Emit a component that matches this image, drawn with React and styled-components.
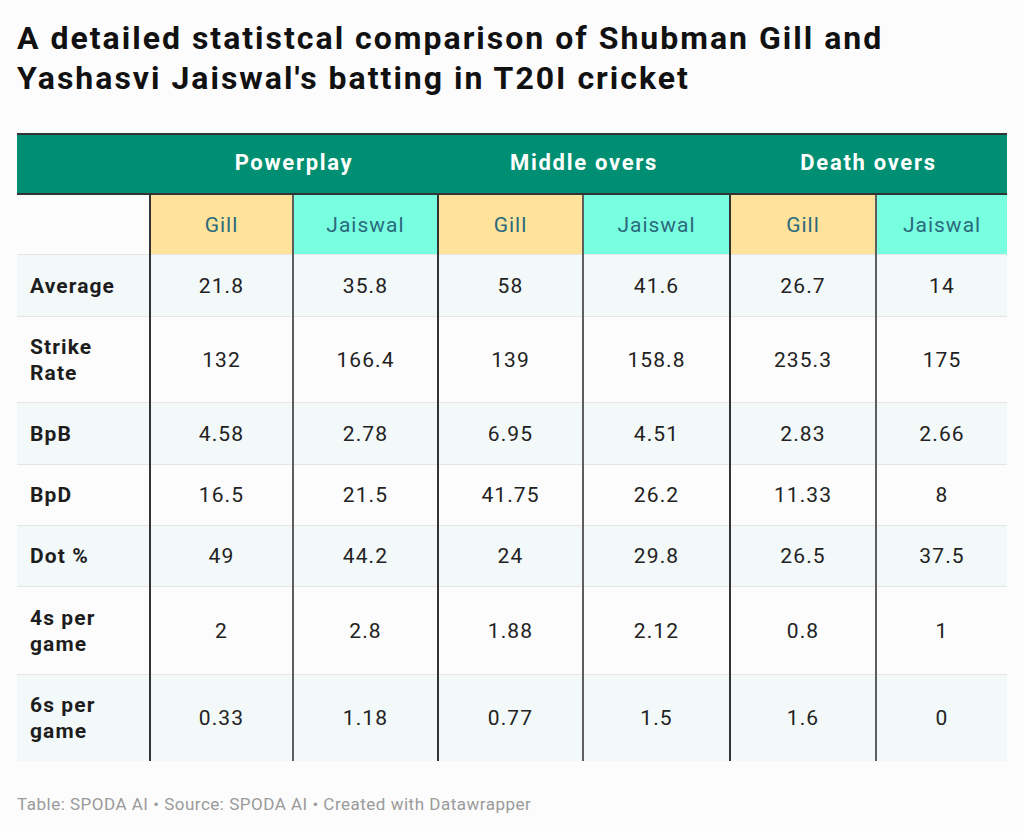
import React from 'react';
import styled, { createGlobalStyle } from 'styled-components';

const GlobalStyle = createGlobalStyle`
  html, body {
    margin: 0;
    padding: 0;
    background: #fcfcfc;
    font-family: Roboto, "Liberation Sans", sans-serif;
  }
`;

const Page = styled.div`
  padding: 18px 17px 0 17px;
  width: 990px;
`;

const Title = styled.h1`
  margin: 0 0 35px 0;
  font-size: 32px;
  line-height: 40px;
  font-weight: 700;
  color: #111;
  letter-spacing: 2px;
  white-space: nowrap;
`;

const Table = styled.table`
  width: 990px;
  border-collapse: collapse;
  table-layout: fixed;
`;

const GroupHead = styled.th`
  background: #008f72;
  color: #fff;
  font-size: 22px;
  font-weight: 700;
  letter-spacing: 1.7px;
  height: 54px;
  padding: 0 0 4px 0;
  border-top: 2px solid #333;
  border-bottom: 2px solid #333;
  text-align: center;
`;

const PlayerHead = styled.th`
  background: ${p => (p.$player === 'Gill' ? '#ffe39b' : '#78ffe0')};
  color: #2b6a7c;
  font-size: 21px;
  font-weight: 400;
  letter-spacing: 1px;
  height: 57px;
  padding: 0;
  text-align: center;
  border-left: ${p => (p.$groupStart ? '2px solid #333' : '2px solid #5e5e5e')};
`;

const BlankHead = styled.th`
  height: 57px;
`;

const Row = styled.tr`
  background: ${p => (p.$striped ? '#f3f9f9' : 'transparent')};
  border-top: 1px solid #e4e6e6;
`;

const Label = styled.td`
  font-size: 21px;
  font-weight: 700;
  letter-spacing: 1.1px;
  color: #1d1d1d;
  line-height: 26px;
  padding: 0 0 0 13px;
  height: ${p => p.$h}px;
`;

const Cell = styled.td`
  font-size: 21px;
  letter-spacing: 1.1px;
  color: #222;
  text-align: center;
  padding: 0;
  border-left: ${p => (p.$groupStart ? '2px solid #333' : '2px solid #5e5e5e')};
`;

const Footer = styled.div`
  margin-top: 33px;
  font-size: 17px;
  letter-spacing: 0.5px;
  color: #9a9a9a;
`;

const players = ['Gill', 'Jaiswal', 'Gill', 'Jaiswal', 'Gill', 'Jaiswal'];

const rows = [
  { label: 'Average', h: 61, values: ['21.8', '35.8', '58', '41.6', '26.7', '14'] },
  { label: ['Strike', 'Rate'], h: 85, values: ['132', '166.4', '139', '158.8', '235.3', '175'] },
  { label: 'BpB', h: 61, values: ['4.58', '2.78', '6.95', '4.51', '2.83', '2.66'] },
  { label: 'BpD', h: 60, values: ['16.5', '21.5', '41.75', '26.2', '11.33', '8'] },
  { label: 'Dot %', h: 60, values: ['49', '44.2', '24', '29.8', '26.5', '37.5'] },
  { label: ['4s per', 'game'], h: 87, values: ['2', '2.8', '1.88', '2.12', '0.8', '1'] },
  { label: ['6s per', 'game'], h: 86, values: ['0.33', '1.18', '0.77', '1.5', '1.6', '0'] },
];

const widths = [133, 143, 145, 145, 147, 146, 131];

export default function App() {
  return (
    <Page>
      <GlobalStyle />
      <Title>
        A detailed statistcal comparison of Shubman Gill and
        <br />
        Yashasvi Jaiswal's batting in T20I cricket
      </Title>
      <Table>
        <colgroup>
          {widths.map((w, i) => (
            <col key={i} style={{ width: w }} />
          ))}
        </colgroup>
        <thead>
          <tr>
            <GroupHead />
            <GroupHead colSpan={2}>Powerplay</GroupHead>
            <GroupHead colSpan={2}>Middle overs</GroupHead>
            <GroupHead colSpan={2}>Death overs</GroupHead>
          </tr>
          <tr>
            <BlankHead />
            {players.map((p, i) => (
              <PlayerHead key={i} $player={p} $groupStart={i % 2 === 0}>
                {p}
              </PlayerHead>
            ))}
          </tr>
        </thead>
        <tbody>
          {rows.map((r, i) => (
            <Row key={i} $striped={i % 2 === 0}>
              <Label $h={r.h}>
                {Array.isArray(r.label) ? (
                  <>
                    {r.label[0]}
                    <br />
                    {r.label[1]}
                  </>
                ) : (
                  r.label
                )}
              </Label>
              {r.values.map((v, j) => (
                <Cell key={j} $groupStart={j % 2 === 0}>
                  {v}
                </Cell>
              ))}
            </Row>
          ))}
        </tbody>
      </Table>
      <Footer>Table: SPODA AI • Source: SPODA AI • Created with Datawrapper</Footer>
    </Page>
  );
}
